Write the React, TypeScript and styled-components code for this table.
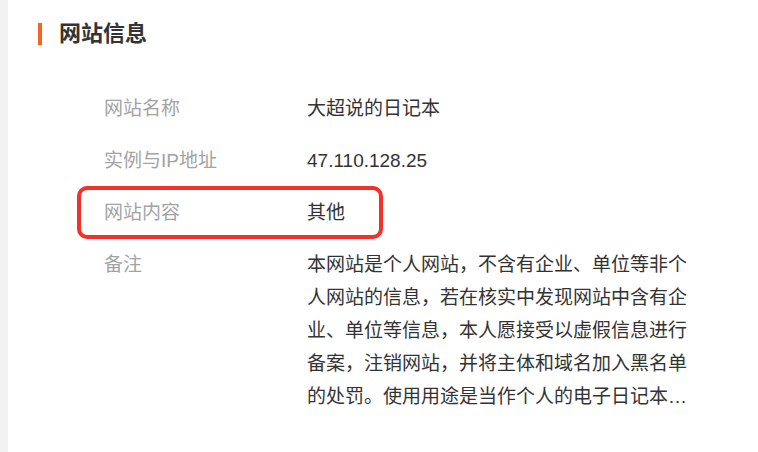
import React from "react";
import styled, { createGlobalStyle } from "styled-components";

const GlobalStyle = createGlobalStyle`
    html, body {
        margin: 0;
        padding: 0;
        background: #ffffff;
    }
    body {
        font-family: "Liberation Sans", "Noto Sans CJK SC", sans-serif;
    }
`

const Page = styled.div`
    display: flex;
    width: 758px;
    height: 452px;
    overflow: hidden;
`

const Gutter = styled.div`
    width: 8px;
    flex-shrink: 0;
    background-color: #f2f2f2;
`

const Panel = styled.div`
    flex: 1;
    background-color: #ffffff;
    padding-top: 19px;
`

const Heading = styled.div`
    display: flex;
    align-items: center;
    gap: 17px;
    padding-left: 30px;
    height: 30px;
`

const Accent = styled.span`
    width: 4px;
    height: 22px;
    margin-top: -1px;
    background-color: #f26522;
`

const HeadingText = styled.h2`
    margin: 0;
    font-size: 22px;
    font-weight: 600;
    line-height: 30px;
    color: #333333;
`

const InfoList = styled.dl`
    margin: 43px 0 0;
    padding-left: 96px;
    display: flex;
    flex-direction: column;
    gap: 19px;
`

const Row = styled.div`
    position: relative;
    display: grid;
    grid-template-columns: 203px 392px;
    font-size: 19px;
    line-height: 33px;
`

const Label = styled.dt`
    margin: 0;
    color: #a3a3a3;
`

const Value = styled.dd<{ $clamp?: number }>`
    margin: 0;
    color: #333333;
    ${(props) => props.$clamp ? `
        display: -webkit-box;
        -webkit-box-orient: vertical;
        -webkit-line-clamp: ${props.$clamp};
        overflow: hidden;
    ` : ""}
`

const Highlight = styled.span`
    position: absolute;
    left: -27px;
    top: -10px;
    width: 306px;
    height: 53px;
    box-sizing: border-box;
    border: 4px solid #f3302a;
    border-radius: 10px;
    pointer-events: none;
`

const rows = [
    { label: "网站名称", value: "大超说的日记本" },
    { label: "实例与IP地址", value: "47.110.128.25" },
    { label: "网站内容", value: "其他", highlight: true },
    {
        label: "备注",
        value: "本网站是个人网站，不含有企业、单位等非个人网站的信息，若在核实中发现网站中含有企业、单位等信息，本人愿接受以虚假信息进行备案，注销网站，并将主体和域名加入黑名单的处罚。使用用途是当作个人的电子日记本…",
        clamp: 5,
    },
]

const App = () => {
    return (
        <>
            <GlobalStyle />
            <Page>
                <Gutter />
                <Panel>
                    <Heading>
                        <Accent />
                        <HeadingText>网站信息</HeadingText>
                    </Heading>
                    <InfoList>
                        {rows.map((row) => (
                            <Row key={row.label}>
                                <Label>{row.label}</Label>
                                <Value $clamp={row.clamp}>{row.value}</Value>
                                {row.highlight && <Highlight />}
                            </Row>
                        ))}
                    </InfoList>
                </Panel>
            </Page>
        </>
    )
}

export default App;
